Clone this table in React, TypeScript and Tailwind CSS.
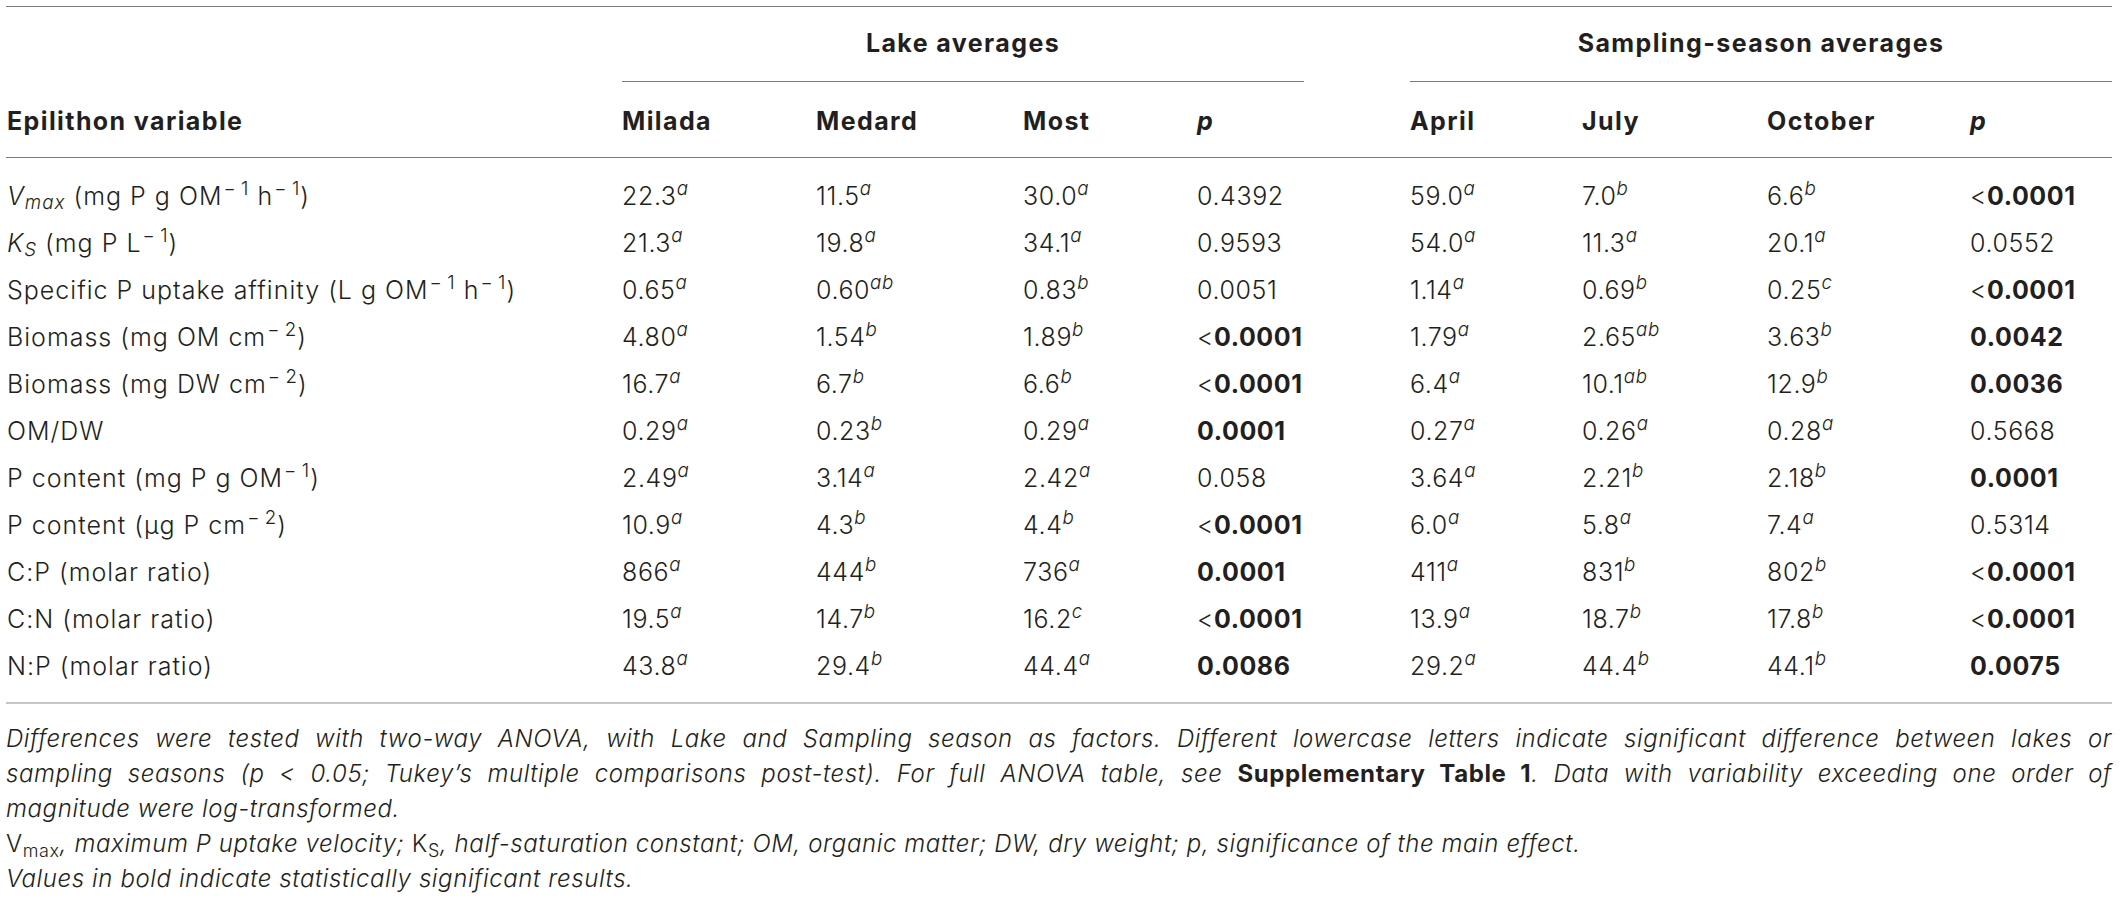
import type { ReactNode } from "react";

type Cell = [string, string];
type PVal = { v: string; bold?: boolean };
type Row = { label: ReactNode; lake: Cell[]; lp: PVal; season: Cell[]; sp: PVal };

const m1 = <sup className="pl-[1px]">−{"\u2009"}1</sup>;
const m2 = <sup className="pl-[1px]">−{"\u2009"}2</sup>;

const rows: Row[] = [
  {
    label: (
      <>
        <i>V</i>
        <sub className="italic">max</sub> (mg P g OM{m1} h{m1})
      </>
    ),
    lake: [["22.3", "a"], ["11.5", "a"], ["30.0", "a"]],
    lp: { v: "0.4392" },
    season: [["59.0", "a"], ["7.0", "b"], ["6.6", "b"]],
    sp: { v: "<0.0001", bold: true },
  },
  {
    label: (
      <>
        <i>K</i>
        <sub className="italic">S</sub> (mg P L{m1})
      </>
    ),
    lake: [["21.3", "a"], ["19.8", "a"], ["34.1", "a"]],
    lp: { v: "0.9593" },
    season: [["54.0", "a"], ["11.3", "a"], ["20.1", "a"]],
    sp: { v: "0.0552" },
  },
  {
    label: <>Specific P uptake affinity (L g OM{m1} h{m1})</>,
    lake: [["0.65", "a"], ["0.60", "ab"], ["0.83", "b"]],
    lp: { v: "0.0051" },
    season: [["1.14", "a"], ["0.69", "b"], ["0.25", "c"]],
    sp: { v: "<0.0001", bold: true },
  },
  {
    label: <>Biomass (mg OM cm{m2})</>,
    lake: [["4.80", "a"], ["1.54", "b"], ["1.89", "b"]],
    lp: { v: "<0.0001", bold: true },
    season: [["1.79", "a"], ["2.65", "ab"], ["3.63", "b"]],
    sp: { v: "0.0042", bold: true },
  },
  {
    label: <>Biomass (mg DW cm{m2})</>,
    lake: [["16.7", "a"], ["6.7", "b"], ["6.6", "b"]],
    lp: { v: "<0.0001", bold: true },
    season: [["6.4", "a"], ["10.1", "ab"], ["12.9", "b"]],
    sp: { v: "0.0036", bold: true },
  },
  {
    label: <>OM/DW</>,
    lake: [["0.29", "a"], ["0.23", "b"], ["0.29", "a"]],
    lp: { v: "0.0001", bold: true },
    season: [["0.27", "a"], ["0.26", "a"], ["0.28", "a"]],
    sp: { v: "0.5668" },
  },
  {
    label: <>P content (mg P g OM{m1})</>,
    lake: [["2.49", "a"], ["3.14", "a"], ["2.42", "a"]],
    lp: { v: "0.058" },
    season: [["3.64", "a"], ["2.21", "b"], ["2.18", "b"]],
    sp: { v: "0.0001", bold: true },
  },
  {
    label: <>P content (μg P cm{m2})</>,
    lake: [["10.9", "a"], ["4.3", "b"], ["4.4", "b"]],
    lp: { v: "<0.0001", bold: true },
    season: [["6.0", "a"], ["5.8", "a"], ["7.4", "a"]],
    sp: { v: "0.5314" },
  },
  {
    label: <>C:P (molar ratio)</>,
    lake: [["866", "a"], ["444", "b"], ["736", "a"]],
    lp: { v: "0.0001", bold: true },
    season: [["411", "a"], ["831", "b"], ["802", "b"]],
    sp: { v: "<0.0001", bold: true },
  },
  {
    label: <>C:N (molar ratio)</>,
    lake: [["19.5", "a"], ["14.7", "b"], ["16.2", "c"]],
    lp: { v: "<0.0001", bold: true },
    season: [["13.9", "a"], ["18.7", "b"], ["17.8", "b"]],
    sp: { v: "<0.0001", bold: true },
  },
  {
    label: <>N:P (molar ratio)</>,
    lake: [["43.8", "a"], ["29.4", "b"], ["44.4", "a"]],
    lp: { v: "0.0086", bold: true },
    season: [["29.2", "a"], ["44.4", "b"], ["44.1", "b"]],
    sp: { v: "0.0075", bold: true },
  },
];

const cols =
  "grid grid-cols-[616px_194px_207px_174px_213px_172px_185px_203px_142px]";

function Val({ c }: { c: Cell }) {
  return (
    <div>
      {c[0]}
      <sup className="italic">{c[1]}</sup>
    </div>
  );
}

function P({ p }: { p: PVal }) {
  if (!p.bold) return <div>{p.v}</div>;
  if (p.v.startsWith("<"))
    return (
      <div>
        &lt;<span className="font-bold">{p.v.slice(1)}</span>
      </div>
    );
  return <div className="font-bold">{p.v}</div>;
}

export default function App() {
  return (
    <div className="w-[2121px] h-[901px] bg-white text-[#231f20] font-['Inter',sans-serif] font-light text-[25px] tracking-[0.6px] pt-[6px]">
      <div className="ml-[6px] w-[2106px]">
        {/* header */}
        <div className="border-t border-[#7a7a7a]">
          <div className={`${cols} h-[75px] font-bold tracking-[1.4px]`}>
            <div />
            <div className="col-span-4 pr-[106px]">
              <div className="h-full flex items-center justify-center border-b border-[#7a7a7a]">
                Lake averages
              </div>
            </div>
            <div className="col-span-4">
              <div className="h-full flex items-center justify-center border-b border-[#7a7a7a]">
                Sampling-season averages
              </div>
            </div>
          </div>
          <div className={`${cols} h-[76px] items-center pt-[4px] font-bold tracking-[1.4px] border-b border-[#7a7a7a]`}>
            <div className="pl-[1px]">Epilithon variable</div>
            <div>Milada</div>
            <div>Medard</div>
            <div>Most</div>
            <div className="italic">p</div>
            <div>April</div>
            <div>July</div>
            <div>October</div>
            <div className="italic">p</div>
          </div>
        </div>

        {/* body */}
        <div className="pt-[15px] pb-[12px] border-b-2 border-[#c6c6c6]">
          {rows.map((r, i) => (
            <div key={i} className={`${cols} h-[47px] items-center whitespace-nowrap`}>
              <div className="pl-[1px] tracking-[1px]">{r.label}</div>
              {r.lake.map((c, j) => (
                <Val key={j} c={c} />
              ))}
              <P p={r.lp} />
              {r.season.map((c, j) => (
                <Val key={j} c={c} />
              ))}
              <P p={r.sp} />
            </div>
          ))}
        </div>
      </div>

      {/* footnotes */}
      <div className="ml-[6px] w-[2106px] mt-[17px] italic text-[24px] leading-[35px] tracking-[0.6px]">
        <div className="text-justify [text-align-last:justify] whitespace-nowrap">
          Differences were tested with two-way ANOVA, with Lake and Sampling season as factors. Different
          lowercase letters indicate significant difference between lakes or
        </div>
        <div className="text-justify [text-align-last:justify] whitespace-nowrap">
          sampling seasons (p &lt; 0.05; Tukey’s multiple comparisons post-test). For full ANOVA table, see{" "}
          <span className="not-italic font-bold">Supplementary Table 1</span>. Data with variability exceeding
          one order of
        </div>
        <div>magnitude were log-transformed.</div>
        <div>
          <span className="not-italic">V</span>
          <sub className="not-italic">max</sub>, maximum P uptake velocity;{" "}
          <span className="not-italic">K</span>
          <sub className="not-italic">S</sub>, half-saturation constant; OM, organic matter; DW, dry weight; p,
          significance of the main effect.
        </div>
        <div>Values in bold indicate statistically significant results.</div>
      </div>
    </div>
  );
}
